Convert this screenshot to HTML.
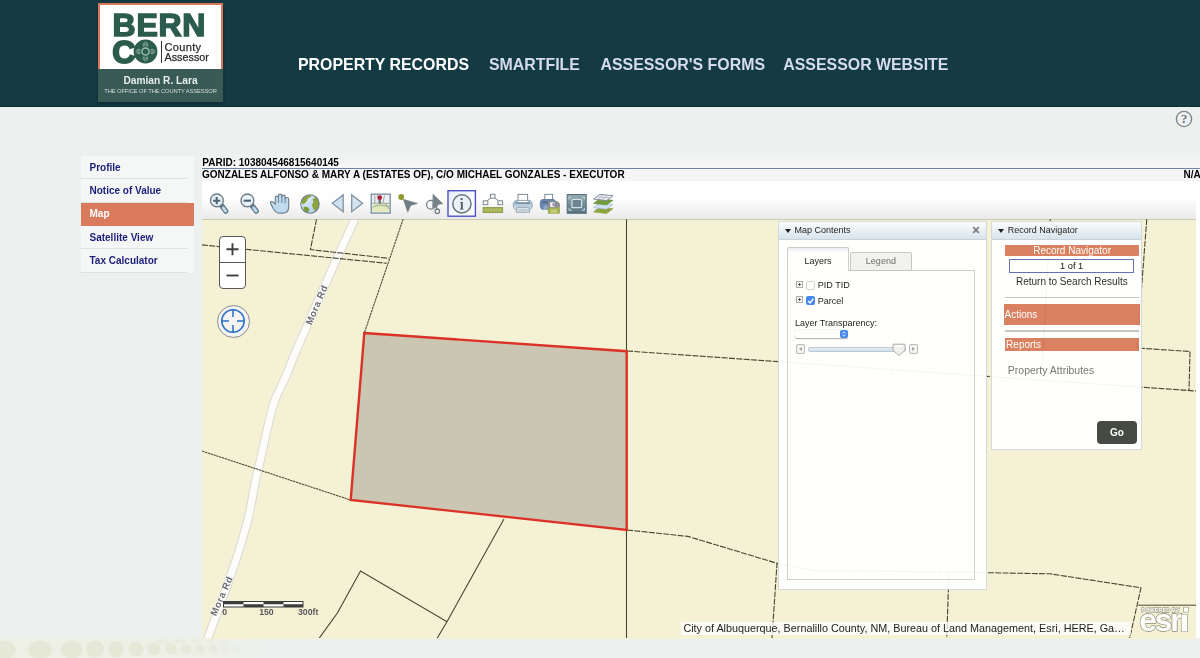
<!DOCTYPE html>
<html lang="en">
<head>
<meta charset="utf-8">
<title>Bernalillo County Assessor - Map</title>
<style>
*{box-sizing:border-box}
html,body{margin:0;padding:0}
body{width:1200px;height:658px;overflow:hidden;position:relative;background:#ecf0ef;font-family:"Liberation Sans",Arial,sans-serif;color:#000}
.abs{position:absolute}
#hdr,#side,#main{will-change:transform}
#hdr{position:absolute;left:0;top:0;width:1200px;height:106.6px;background:#143a43;border-bottom:1px solid #0f2f37}
#nav a{position:absolute;top:54px;font-weight:bold;font-size:15.9px;line-height:22px;color:#fff;white-space:nowrap;text-decoration:none;transform-origin:0 50%}
#nav a.dim{color:#d5dcea}
#logo{position:absolute;left:98px;top:3px;width:125px;height:99px;box-shadow:0 2px 3px rgba(0,0,0,.25)}
#logo .top{position:absolute;left:0;top:0;width:125px;height:65.7px;background:#fff;border:2.5px solid #d9775a;border-bottom:none}
#logo .bot{position:absolute;left:0;top:65.7px;width:125px;height:33.3px;background:#3a5a56}
#side{position:absolute;left:81px;top:156.4px;width:113px}
#side div{height:23.35px;background:#f5f6f6;position:relative}
#side div a{display:block;margin-right:7px;height:23.35px;border-bottom:1px solid #dfe0e0;padding-left:8.5px;font-weight:bold;font-size:10px;line-height:23.7px;color:#1b1f7a;text-decoration:none}
#side div.act{background:linear-gradient(#d87a5b 0,#d87a5b 22.6px,#f5f6f6 22.6px)}
#side div.act a{color:#fff;border-bottom-color:transparent;line-height:22.6px}
#main{position:absolute;left:202px;top:107px;width:998px;height:531px}
#tb{position:absolute;left:0;top:74px;width:994px;height:39px;background:linear-gradient(#fff 0%,#fefefe 45%,#e9e9e9 100%)}
#map{position:absolute;left:0;top:112px;width:994px;height:419.7px;background:#f4f1d4;overflow:hidden}
.panel{position:absolute;background:#fff;opacity:.94;border:1px solid #d3d7da}
.ptitle{position:absolute;left:0;top:0;right:0;height:18px;background:linear-gradient(#fafcfd,#e9f0f6 45%,#d6e3ee);border-bottom:1px solid #c6d1da;font-size:9px;line-height:17px;color:#111}
.obar{position:absolute;background:#d87a5b;color:#fff}

#grad{position:absolute;left:202px;top:151px;width:998px;height:17.5px;background:linear-gradient(#ecf0ef 0%,#f0f3f2 40%,#f8f8f6 100%)}
#parid{position:absolute;left:0.3px;top:49.8px;font-weight:bold;font-size:10px;line-height:12px;white-space:nowrap}
#rule{position:absolute;left:0;top:60.5px;width:998px;height:1.3px;background:#6d86a8}
#own{position:absolute;left:0;top:62.3px;width:998px;height:11.4px;background:#f5f5f5;font-weight:bold;font-size:10px;line-height:12px;white-space:nowrap}
#na{position:absolute;left:981.5px;top:62px;font-weight:bold;font-size:10px;line-height:12px;white-space:nowrap}
#white{position:absolute;left:0;top:74px;width:998px;height:457px;background:#fff}
.zoomctl{position:absolute;left:17px;top:17.3px;width:27px;height:53px;background:#fff;border:1px solid #57585a;border-radius:4px}
.zoomctl i{position:absolute;left:0;right:0;top:25px;height:1px;background:#57585a}
.loc{position:absolute;left:14.9px;top:85.8px;width:33px;height:33px;border-radius:50%;background:#f3f3f3;border:1px solid #8c8c8c}
#attr{position:absolute;left:478.7px;top:402.8px;width:450px;height:13px;background:rgba(255,255,255,.72);font-size:10.8px;line-height:13px;color:#222;white-space:nowrap;padding-left:2.7px}
.tab{position:absolute;font-size:9px;text-align:center;color:#111}
.cb{position:absolute;width:9.5px;height:9.5px;border-radius:2px}
.plus{position:absolute;width:7px;height:7px;border:1px solid #a9a9a9;background:#f4f4f4}
.plus:before{content:"";position:absolute;left:1px;right:1px;top:2px;height:1px;background:#555}
.plus:after{content:"";position:absolute;top:1px;bottom:1px;left:2px;width:1px;background:#555}
.ptxt{position:absolute;font-size:9px;line-height:11px;white-space:nowrap;color:#111}
.hr{position:absolute;height:1.6px;background:#c2c2c2}
</style>
</head>
<body>

<!-- header -->
<div id="hdr">
  <div id="logo">
    <div class="top"></div>
    <div class="bot"></div>
    <div class="abs" id="bern" style="left:14.6px;top:3.8px;font-weight:bold;font-size:32px;line-height:36px;color:#2b5c4e;white-space:nowrap;letter-spacing:.7px;-webkit-text-stroke:1.5px #2b5c4e">BERN</div>
    <div class="abs" id="cee" style="left:14.2px;top:30.7px;font-weight:bold;font-size:32px;line-height:36px;color:#2b5c4e;-webkit-text-stroke:1.8px #2b5c4e">C</div>
    <svg class="abs" style="left:35px;top:36.3px" width="25" height="25" viewBox="-12.5 -12.5 25 25">
      <circle r="11.9" fill="#2b5c4e"/>
      <g stroke="#9cbcae" stroke-width=".75" fill="none">
        <circle r="3.6" stroke-width="1.5"/>
        <path d="M-2.1 -5V-8.3M-.7 -5.2V-9.8M.7 -5.2V-9.8M2.1 -5V-8.3"/>
        <path d="M-2.1 5V8.3M-.7 5.2V9.8M.7 5.2V9.8M2.1 5V8.3"/>
        <path d="M-5 -2.1H-8.3M-5.2 -.7H-9.8M-5.2 .7H-9.8M-5 2.1H-8.3"/>
        <path d="M5 -2.1H8.3M5.2 -.7H9.8M5.2 .7H9.8M5 2.1H8.3"/>
      </g>
    </svg>
    <div class="abs" style="left:63px;top:37.5px;width:1px;height:22px;background:#333"></div>
    <div class="abs" id="cnty" style="left:66.5px;top:38px;font-size:11px;line-height:13px;color:#2b2b2b;white-space:nowrap;letter-spacing:.35px;-webkit-text-stroke:.25px #2b2b2b">County</div>
    <div class="abs" id="assr" style="left:66.5px;top:48px;font-size:10.8px;line-height:13px;color:#2b2b2b;white-space:nowrap;-webkit-text-stroke:.25px #2b2b2b">Assessor</div>
    <div class="abs" id="dam" style="left:0;top:70.5px;width:125px;text-align:center;font-weight:bold;font-size:10.2px;line-height:13px;color:#e3ece8;white-space:nowrap">Damian R. Lara</div>
    <div class="abs" id="off" style="left:0;top:84.3px;width:125px;text-align:center;font-size:5.8px;line-height:8px;color:#d4dedb;white-space:nowrap;letter-spacing:-.12px">THE OFFICE OF THE COUNTY ASSESSOR</div>
  </div>
  <div id="nav">
    <a style="left:298px">PROPERTY RECORDS</a>
    <a class="dim" style="left:489px">SMARTFILE</a>
    <a class="dim" style="left:600.5px">ASSESSOR'S FORMS</a>
    <a class="dim" style="left:783.3px">ASSESSOR WEBSITE</a>
  </div>
</div>

<div id="grad"></div>
<svg class="abs" style="left:1174.2px;top:109.4px" width="20" height="20" viewBox="0 0 20 20"><circle cx="10" cy="10" r="7.6" fill="#eef1f1" stroke="#818586" stroke-width="1.4"/><text x="10" y="14.4" text-anchor="middle" font-family="Liberation Serif, Times New Roman, serif" font-weight="bold" font-size="13.5" fill="#7a7c7d">?</text></svg>
<!-- footer pattern -->
<svg class="abs" style="left:0;top:638px" width="272" height="20" viewBox="0 0 272 20">
  <defs><linearGradient id="gFoot" x1="0" y1="0" x2="1" y2="0"><stop offset="0" stop-color="#eef0e5"/><stop offset=".75" stop-color="#eef0e7"/><stop offset="1" stop-color="#ecf0ee"/></linearGradient></defs>
  <clipPath id="cFoot"><rect x="0" y="1.5" width="272" height="20"/></clipPath><rect x="0" y="0" width="272" height="20" fill="url(#gFoot)"/>
  <g fill="#e5e8d7" clip-path="url(#cFoot)">
    <ellipse cx="4" cy="12" rx="12" ry="9.5"/>
    <ellipse cx="40" cy="12" rx="12" ry="9.5"/>
    <ellipse cx="72" cy="11.5" rx="11" ry="9"/>
    <ellipse cx="95" cy="11" rx="9" ry="8.5" transform="rotate(20 95 11)"/>
    <ellipse cx="116" cy="11" rx="8" ry="8" transform="rotate(25 116 11)"/>
    <ellipse cx="136" cy="11" rx="7.5" ry="7" transform="rotate(25 136 11)"/>
    <ellipse cx="154" cy="11" rx="7" ry="6" transform="rotate(25 154 11)"/>
    <ellipse cx="171" cy="11" rx="6.5" ry="5.5" transform="rotate(25 171 11)" opacity=".9"/>
    <ellipse cx="186" cy="11" rx="6" ry="5" transform="rotate(25 186 11)" opacity=".8"/>
    <ellipse cx="200" cy="11" rx="5.5" ry="4.5" transform="rotate(25 200 11)" opacity=".7"/>
    <ellipse cx="213" cy="11" rx="5" ry="4" transform="rotate(25 213 11)" opacity=".55"/>
    <ellipse cx="225" cy="11" rx="4.5" ry="3.5" transform="rotate(25 225 11)" opacity=".4"/>
    <ellipse cx="236" cy="11" rx="4" ry="3" transform="rotate(25 236 11)" opacity=".3"/>
    <ellipse cx="163" cy="3" rx="6" ry="3" opacity=".6"/><ellipse cx="180" cy="3" rx="5.5" ry="2.8" opacity=".55"/><ellipse cx="196" cy="3" rx="5" ry="2.6" opacity=".5"/><ellipse cx="210" cy="3" rx="4.5" ry="2.4" opacity=".4"/><ellipse cx="223" cy="3" rx="4" ry="2.2" opacity=".3"/>
  </g>
</svg>
<!-- sidebar -->
<div id="side">
  <div><a>Profile</a></div>
  <div><a>Notice of Value</a></div>
  <div class="act"><a>Map</a></div>
  <div><a>Satellite View</a></div>
  <div><a>Tax Calculator</a></div>
</div>

<!-- main -->
<div id="main">
  <div id="white"></div>
  <div id="parid">PARID: 103804546815640145</div>
  <div id="rule"></div>
  <div id="own">GONZALES ALFONSO &amp; MARY A (ESTATES OF), C/O MICHAEL GONZALES - EXECUTOR</div>
  <div id="na">N/A</div>
  <div id="tb">
<svg class="abs" style="left:0;top:0" width="994" height="39" viewBox="202 181 994 39">
  <defs>
    <linearGradient id="gOcean" x1="0" y1="0" x2="1" y2="1"><stop offset="0" stop-color="#eef4ff"/><stop offset="1" stop-color="#a9c9ec"/></linearGradient>
    <linearGradient id="gPrn" x1="0" y1="0" x2="0" y2="1"><stop offset="0" stop-color="#9fb9d0"/><stop offset="1" stop-color="#d3e3f0"/></linearGradient>
    <linearGradient id="gFs" x1="0" y1="0" x2="0" y2="1"><stop offset="0" stop-color="#94adac"/><stop offset="1" stop-color="#56707f"/></linearGradient>
    <linearGradient id="gInfo" x1="0" y1="0" x2="1" y2="1"><stop offset="0" stop-color="#e3eefb"/><stop offset=".6" stop-color="#fbfcff"/><stop offset="1" stop-color="#fff"/></linearGradient>
    <clipPath id="cGlobe"><circle cx="310" cy="204" r="9"/></clipPath>
  </defs>
  <!-- zoom in -->
  <g id="ic1">
    <path d="M221.2 205.2L225.8 211.2" stroke="#627783" stroke-width="5.2" stroke-linecap="round"/>
    <path d="M223.2 207.8L225.7 211.1" stroke="#bcdcee" stroke-width="2.8" stroke-linecap="round"/>
    <circle cx="216.9" cy="200.4" r="6.4" fill="#e9f1f6" stroke="#6a7d88" stroke-width="1.4"/>
    <path d="M213.1 200.7H220.3M216.7 197.1V204.3" stroke="#4f6672" stroke-width="2.1"/>
  </g>
  <!-- zoom out -->
  <g id="ic2">
    <path d="M251.7 205.2L256.3 211.2" stroke="#627783" stroke-width="5.2" stroke-linecap="round"/>
    <path d="M253.7 207.8L256.2 211.1" stroke="#bcdcee" stroke-width="2.8" stroke-linecap="round"/>
    <circle cx="247.4" cy="200.4" r="6.4" fill="#e9f1f6" stroke="#6a7d88" stroke-width="1.4"/>
    <path d="M243.6 200.7H251" stroke="#4f6672" stroke-width="2.1"/>
  </g>
  <!-- hand -->
  <g id="ic3">
    <path d="M270.5 203.4C269.9 202 271.6 200.9 273 201.9L275.3 204.2V197.6C275.3 195.5 278.4 195.5 278.4 197.6V195.9C278.4 193.6 281.8 193.6 281.8 195.9V196.7C281.8 194.6 285.2 194.6 285.2 196.7V199C285.2 197 288.7 197 288.7 199.2V207C288.7 211 286 213.2 282.5 213.2H279.5C276.5 213.2 275 211.5 273.5 209Z" fill="#c1daef" stroke="#6d8291" stroke-width="1.2" stroke-linejoin="round"/>
    <path d="M278.4 197.6V203M281.8 196V203M285.2 197V203.3" stroke="#6d8291" stroke-width="1" fill="none"/>
  </g>
  <!-- globe -->
  <g id="ic4">
    <circle cx="310" cy="204" r="9.2" fill="url(#gOcean)"/>
    <g clip-path="url(#cGlobe)" fill="#8aa63a">
      <path d="M300 200C301.5 196 305 194.5 309.5 194.3L311.5 196.5L308 198.5L306.5 201.5L303.5 204.5L301.5 203Z"/>
      <path d="M313.5 195L317 197L319.5 201V208L316 212L313 208.5L312 205L313.5 202L312.5 199.5L315 197.5Z"/>
      <path d="M303.5 206.5L307.5 207L309.5 209.5L307.5 213.5L304.5 212Z" fill="#7a9c33"/>
    </g>
    <circle cx="310" cy="204" r="9.2" fill="none" stroke="#6d7f88" stroke-width="1.1"/>
  </g>
  <!-- prev / next -->
  <path d="M332.3 203.3L343.2 194.9V211.7Z" fill="#cfe0f0" stroke="#8193a0" stroke-width="1.3" stroke-linejoin="miter"/>
  <path d="M362.5 203.3L351.7 194.9V211.7Z" fill="#d6e4f1" stroke="#8193a0" stroke-width="1.3" stroke-linejoin="miter"/>
  <!-- map pin icon -->
  <g id="ic7">
    <rect x="371.3" y="194.2" width="18.9" height="18.9" fill="#eef2ea" stroke="#8499a8" stroke-width="1.5"/>
    <rect x="372.8" y="203.5" width="16" height="8.2" fill="#e1e8ba"/>
    <rect x="372.8" y="195.6" width="16" height="8" fill="#edf0f2"/>
    <g stroke="#8b948d" stroke-width=".8" fill="none">
      <path d="M372.5 203.3H389M372.5 207.2C378 204.5 384 204.5 389 207.2M377 195.5L379 203M384.5 195.5L383 203M385.5 203.5L389 209M374.8 195.5V203"/>
    </g>
    <path d="M380 198.5V203.5" stroke="#3c3c3c" stroke-width="1.3"/>
    <circle cx="379.8" cy="197.6" r="2.3" fill="#b3173f"/>
  </g>
  <!-- point select -->
  <g id="ic8">
    <path d="M403.3 199.3L417.4 203.5L410.6 205.4L407.8 212.2Z" fill="#6f7d83" stroke="#6f7d83" stroke-width=".6" stroke-linejoin="round"/>
    <circle cx="401.2" cy="197" r="2.9" fill="#8f9a2c"/>
  </g>
  <!-- lasso select -->
  <g id="ic9">
    <circle cx="431" cy="204.7" r="4.4" fill="none" stroke="#727f85" stroke-width="1.2"/>
    <path d="M433 193.9L442.9 203.8L438.2 204.5L436.6 207.3L432.5 207.8Z" fill="#76848a" stroke="#76848a" stroke-width=".5" stroke-linejoin="round"/>
    <path d="M436 206L437 209.2" stroke="#727f85" stroke-width="1.4"/>
    <circle cx="437.3" cy="211.2" r="2.2" fill="#fff" stroke="#727f85" stroke-width="1.3"/>
  </g>
  <!-- info (selected) -->
  <g id="ic10">
    <rect x="448" y="190.7" width="27.4" height="25.5" fill="url(#gInfo)" stroke="#4c52c6" stroke-width="1.4"/>
    <circle cx="461.9" cy="203.9" r="9.1" fill="#eaf1f7" stroke="#66777e" stroke-width="1.5"/>
    <circle cx="461.6" cy="199.2" r="1.15" fill="#4a5a60"/>
    <path d="M460.2 202H462.8V208.3L463.8 209.5H459.6L460.9 208.3V203.1H460.2Z" fill="#4a5a60"/>
  </g>
  <!-- measure -->
  <g id="ic11">
    <path d="M490.5 198L487.5 200.6M494.8 198L498.2 200.6" stroke="#7b878c" stroke-width="1"/>
    <rect x="490.4" y="194.3" width="4.6" height="3.9" fill="#fff" stroke="#7b878c" stroke-width="1"/>
    <rect x="483.2" y="200.8" width="4.6" height="3.9" fill="#fff" stroke="#7b878c" stroke-width="1"/>
    <rect x="498" y="200.8" width="4.6" height="3.9" fill="#fff" stroke="#7b878c" stroke-width="1"/>
    <rect x="483.1" y="207.6" width="19.6" height="4.9" fill="#a7b354" stroke="#8b9742" stroke-width=".9"/>
    <path d="M486 208.7V211.5M488.8 208.7V211.5M491.6 208.7V211.5M494.4 208.7V211.5M497.2 208.7V211.5M500 208.7V211.5" stroke="#c3cc85" stroke-width=".8"/>
  </g>
  <!-- print -->
  <g id="ic12">
    <rect x="518" y="194.4" width="9.6" height="7" fill="#fff" stroke="#808c93" stroke-width="1"/>
    <path d="M516.5 200.4H529C531 200.4 532.2 202.5 532.2 205C532.2 207.8 531 210 529 210H516.5C514.5 210 513.2 207.8 513.2 205C513.2 202.5 514.5 200.4 516.5 200.4Z" fill="url(#gPrn)" stroke="#8ea2b2" stroke-width=".9"/>
    <rect x="518.1" y="201" width="9.4" height="1.2" fill="#fff"/>
    <path d="M515.5 203.1H530" stroke="#64747f" stroke-width="1.1"/>
    <path d="M517 207.3H528.7L529.6 212.3H516.1Z" fill="#dbe2e8" stroke="#8c9aa4" stroke-width=".8"/>
    <path d="M518.5 210H527.3" stroke="#b5c0c8" stroke-width="1.2"/>
  </g>
  <!-- print + save -->
  <g id="ic13">
    <rect x="544.8" y="194.4" width="7.8" height="6" fill="#fff" stroke="#808c93" stroke-width="1"/>
    <path d="M542.5 199.5H553C555 199.5 556 201.5 556 204C556 207 555 209.3 553 209.3H542.5C540.8 209.3 540.2 207 540.2 204C540.2 201.5 540.8 199.5 542.5 199.5Z" fill="#6a87b2" stroke="#5c719a" stroke-width=".8"/>
    <path d="M542 202.2H549" stroke="#3f5578" stroke-width="1"/>
    <rect x="543.5" y="205.5" width="4" height="4.5" fill="#93a7c6"/>
    <path d="M548.3 201.8H557.5L559.4 203.6V213.3H548.3Z" fill="#a5b14d" stroke="#8f9a45" stroke-width=".7"/>
    <path d="M548.3 201.8H557.5L559.4 203.6V207.5H548.3Z" fill="#8d8aa2"/>
    <rect x="550.2" y="202.3" width="4.2" height="4.6" fill="#f4f4f6"/>
    <rect x="552.6" y="203" width="1.5" height="3" fill="#8d8aa2"/>
    <rect x="550.5" y="209.3" width="6.8" height="3.6" fill="#c2cb78"/>
  </g>
  <!-- full extent -->
  <g id="ic14">
    <rect x="567.2" y="194.5" width="19" height="18.8" fill="url(#gFs)" stroke="#546e7d" stroke-width="1"/>
    <rect x="571.9" y="199.3" width="9.7" height="8.4" rx="1.2" fill="#6e8592" stroke="#d3e0e5" stroke-width="1.3"/>
    <path d="M569.2 199.5V197.2H571.8M584.3 199.5V197.2H581.7M569.2 207.8V210.3H571.8M584.3 207.8V210.3H581.7" fill="none" stroke="#c4d4da" stroke-width="1.1"/>
  </g>
  <!-- layers -->
  <g id="ic15" stroke-linejoin="round">
    <path d="M599.5 207.2L613 208.7L606.5 213.6L593.5 212Z" fill="#8ea53c" stroke="#7d9433" stroke-width=".5"/>
    <path d="M599.5 203L613 204.5L606.5 209.2L593.5 207.7Z" fill="#cfe0f4" stroke="#9db0c8" stroke-width=".6"/>
    <path d="M599.5 198.8L613 200.3L606.5 205L593.5 203.5Z" fill="#6f9c3c" stroke="#5f8a33" stroke-width=".5"/>
    <path d="M599.8 194.3L613.2 195.8L606.7 200.6L593.6 199.1Z" fill="#e9ecf2" stroke="#7f8593" stroke-width=".9"/>
    <path d="M597 196.6L610 198.1M603.5 194.8L597.3 199.5M607.8 195.3L601.6 200" stroke="#a9aebb" stroke-width=".7" fill="none"/>
  </g>
</svg>
</div>
  <div id="map">
<svg class="abs" style="left:0;top:0" width="994" height="419" viewBox="202 219 994 419">
  <g fill="none" stroke-linejoin="round">
    <!-- road -->
    <path id="road" d="M354.9 219.0 C350.3 229.3 336.5 259.2 326.8 281.0 C317.1 302.8 303.3 334.3 296.5 350.0 C289.7 365.7 290.1 366.7 286.5 375.0 C282.9 383.3 278.1 391.7 275.0 400.0 C271.9 408.3 270.8 414.5 268.2 425.0 C265.6 435.5 261.8 453.8 259.7 463.0 C257.6 472.2 257.5 471.3 255.7 480.0 C253.9 488.7 250.8 506.7 249.0 515.0 C247.2 523.3 246.9 523.3 245.0 530.0 C243.1 536.7 241.4 543.3 237.6 555.0 C233.8 566.7 227.0 586.0 222.0 600.0 C217.0 614.0 209.9 632.5 207.5 639.0" stroke="#d9d9d6" stroke-width="9"/>
    <path d="M354.9 219.0 C350.3 229.3 336.5 259.2 326.8 281.0 C317.1 302.8 303.3 334.3 296.5 350.0 C289.7 365.7 290.1 366.7 286.5 375.0 C282.9 383.3 278.1 391.7 275.0 400.0 C271.9 408.3 270.8 414.5 268.2 425.0 C265.6 435.5 261.8 453.8 259.7 463.0 C257.6 472.2 257.5 471.3 255.7 480.0 C253.9 488.7 250.8 506.7 249.0 515.0 C247.2 523.3 246.9 523.3 245.0 530.0 C243.1 536.7 241.4 543.3 237.6 555.0 C233.8 566.7 227.0 586.0 222.0 600.0 C217.0 614.0 209.9 632.5 207.5 639.0" stroke="#fdfcf9" stroke-width="7"/>
  </g>
  <g fill="none" stroke="#47462f" stroke-width="1.1">
    <g stroke-dasharray="6 1.3">
      <path d="M202 244.9 L386.8 263.3"/>
      <path d="M316.6 219 L310.4 249.6 L388.8 258.3"/>
      <path d="M627 351 L1196 391"/>
      <path d="M627 530 L688 536.4 L777 563.3 L772 638"/>
      <path d="M777 563.3 L814 570.6 L949 572 L1050 573.8 L1141 587.8 L1129.5 639"/>
      <path d="M949 572 L946.7 638"/>
      <path d="M1146.8 219 L1137 348 L1190 351.5 L1189 390.5"/>
      <path d="M1050.3 219 L1042 370"/>
    </g>
    <g stroke-dasharray="2.4 .6" stroke-width="1.05">
      <path d="M403.2 219 L364.5 332.4"/>
      <path d="M202 451 L350.5 500"/>
    </g>
    <g stroke-width="1.1">
      <path d="M626.5 219 L626.5 351"/>
      <path d="M626.5 530 L626.5 638"/>
      <path d="M319 638.5 L337.4 613 L360.5 571 L447 621.7"/>
      <path d="M504 519 L447 621.7 L437 638.5"/>
      <path d="M1138.3 605.2 L1196 605.2" stroke-width="1"/>
    </g>
  </g>
  <polygon points="364.3,333 626.7,351.2 626.7,529.9 350.7,500" fill="#cbc6b1" stroke="#dc3127" stroke-width="2.4" stroke-linejoin="miter"/>
  <g font-family="Liberation Sans, Arial, sans-serif" font-size="9.5" font-weight="bold" fill="#6a6b73" text-anchor="middle" stroke="#fdfcf8" stroke-width="1.6" paint-order="stroke" stroke-linejoin="round">
    <text transform="translate(316.6,304.8) rotate(-67)" y="3.3" letter-spacing="0.6">Mora Rd</text>
    <text transform="translate(221.6,595.8) rotate(-66)" y="3.3" letter-spacing="0.6">Mora Rd</text>
  </g>
</svg>
<div class="abs" style="left:0;top:0;width:994px;height:1px;background:rgba(150,152,140,.45)"></div>
<!-- zoom slider -->
<div class="zoomctl"><i></i>
  <svg class="abs" style="left:0;top:0" width="25" height="51" viewBox="0 0 25 51"><g stroke="#404040" stroke-width="1.9" fill="none"><path d="M6.5 12.3H18.5M12.5 6.3V18.3"/><path d="M6.5 38.5H18.5"/></g></svg>
</div>
<div class="loc">
  <svg class="abs" style="left:2.5px;top:2.5px" width="26" height="26" viewBox="0 0 26 26"><g fill="none" stroke="#2b6fc4" stroke-width="1.5"><circle cx="13" cy="13" r="11.2"/><path d="M13 1.8V9M13 17V24.2M1.8 13H9M17 13H24.2"/></g></svg>
</div>
<!-- scale bar -->
<svg class="abs" style="left:18px;top:380px" width="110" height="26" viewBox="0 0 110 26">
  <rect x="3.5" y="2.5" width="79.5" height="5.5" fill="#fff" stroke="#3c3c3c" stroke-width="1"/>
  <path d="M3.5 2.5h20v2.75h-20zM23.5 5.25h20v2.75h-20zM43.5 2.5h20v2.75h-20zM63.5 5.25h19.5v2.75h-19.5z" fill="#3c3c3c"/>
  <g font-family="Liberation Sans, Arial, sans-serif" font-size="8.7" font-weight="bold" fill="#585858"><text x="2.3" y="16">0</text><text x="39.2" y="16">150</text><text x="78" y="16">300ft</text></g>
</svg>
<div id="attr">City of Albuquerque, Bernalillo County, NM, Bureau of Land Management, Esri, HERE, Ga…</div>
<!-- esri logo -->
<svg class="abs" style="left:934px;top:384px" width="60" height="34" viewBox="1136 603 60 34">
  <g font-family="Liberation Sans, Arial, sans-serif" font-weight="bold" fill="#fdfdfb" stroke="#a9a795" paint-order="stroke" stroke-linejoin="round" style="filter:drop-shadow(0 0 .7px rgba(110,108,88,.85))">
  <text x="1141.5" y="611.6" font-size="5.4" letter-spacing=".15" stroke-width=".9">POWERED BY</text>
  <text x="1139.3" y="631.4" font-size="31.5" letter-spacing="-2" stroke-width="1.3">esr</text>
  <rect x="1181.6" y="614.6" width="5.6" height="16.8" stroke-width="1.3"/>
  <rect x="1183.8" y="607.6" width="4.4" height="4.2" stroke-width="1.1"/></g>
</svg>

<!-- Map Contents panel -->
<div class="panel" style="left:575.5px;top:2px;width:209px;height:369px">
  <div class="ptitle"><span class="abs" style="left:6.5px;top:7px;width:0;height:0;border-left:3.2px solid transparent;border-right:3.2px solid transparent;border-top:4px solid #111"></span><span class="abs" style="left:16px;top:0">Map Contents</span>
    <svg class="abs" style="left:193px;top:4.3px" width="8" height="8" viewBox="0 0 8 8"><path d="M1.2 1.2L6.8 6.8M6.8 1.2L1.2 6.8" stroke="#767676" stroke-width="1.7" fill="none"/></svg>
  </div>
  <div class="abs" style="left:8.4px;top:48.2px;width:188px;height:310.2px;border:1px solid #cdcdcd;background:rgba(255,255,255,.5)"></div>
  <div class="tab" style="left:8.4px;top:25.3px;width:62px;height:23.9px;line-height:26.2px;border:1px solid #c9c9c9;border-bottom:none;border-radius:2px 2px 0 0;background:linear-gradient(#e9eef4 0,#fff 5px,#fff 100%)">Layers</div>
  <div class="tab" style="left:71.4px;top:30.1px;width:62px;height:18.6px;line-height:17.2px;border:1px solid #c3c3c3;border-radius:2px 2px 0 0;background:#f1f1f1;color:#666">Legend</div>
  <span class="plus" style="left:17.2px;top:59.1px"></span>
  <span class="cb" style="left:27.2px;top:58.6px;border:1px solid #d0d0d0;background:#fff"></span>
  <span class="ptxt" style="left:39.3px;top:58.3px">PID TID</span>
  <span class="plus" style="left:17.2px;top:74.3px"></span>
  <span class="cb" style="left:27.2px;top:73.8px;background:#3b82f0"><svg class="abs" style="left:0;top:0" width="9.5" height="9.5" viewBox="0 0 10 10"><path d="M2.3 5.2L4.3 7.3L7.8 2.8" stroke="#fff" stroke-width="1.5" fill="none"/></svg></span>
  <span class="ptxt" style="left:39.3px;top:73.5px">Parcel</span>
  <span class="ptxt" style="left:16.4px;top:96px">Layer Transparency:</span>
  <span class="abs" style="left:16.4px;top:108.2px;width:53px;height:8px;border-radius:2px;background:#fff;box-shadow:0 .5px 1px rgba(0,0,0,.35)"><span class="abs" style="right:0;top:0;width:8px;height:8px;border-radius:2px;background:#3b82f0"><svg class="abs" style="left:0;top:0" width="8" height="8" viewBox="0 0 8 8"><path d="M2.5 3.2L4 1.8L5.5 3.2M2.5 4.8L4 6.2L5.5 4.8" stroke="#fff" stroke-width=".9" fill="none"/></svg></span></span>
  <!-- slider -->
  <span class="abs" style="left:17.7px;top:121.6px;width:9px;height:10.8px;border:1px solid #b5b5b5;border-radius:2px;background:#f4f4f4"><span class="abs" style="left:1.5px;top:2px;border-top:2.6px solid transparent;border-bottom:2.6px solid transparent;border-right:3.5px solid #a0a0a0"></span></span>
  <span class="abs" style="left:29.2px;top:124.6px;width:98px;height:5.4px;border:1px solid #b9c9d6;border-radius:2px;background:linear-gradient(#e4edf4,#cfdde8)"></span>
  <svg class="abs" style="left:113.7px;top:120.9px" width="14" height="13" viewBox="0 0 14 13"><path d="M1 1.2H13V7.4L7 12.4L1 7.4Z" fill="#f0f0f0" stroke="#a9a9a9" stroke-width="1"/><path d="M3 3.2H11" stroke="#fff" stroke-width="1.2"/></svg>
  <span class="abs" style="left:130px;top:121.6px;width:9px;height:10.8px;border:1px solid #b5b5b5;border-radius:2px;background:#f4f4f4"><span class="abs" style="left:2.5px;top:2px;border-top:2.6px solid transparent;border-bottom:2.6px solid transparent;border-left:3.5px solid #a0a0a0"></span></span>
</div>

<!-- Record Navigator panel -->
<div class="panel" style="left:788.8px;top:2px;width:151.2px;height:228.5px">
  <div class="ptitle"><span class="abs" style="left:6.5px;top:7px;width:0;height:0;border-left:3.2px solid transparent;border-right:3.2px solid transparent;border-top:4px solid #111"></span><span class="abs" style="left:16px;top:0">Record Navigator</span></div>
  <div class="obar" style="left:13.5px;top:22.8px;width:133.6px;height:11px;font-size:10px;line-height:11px;text-align:center">Record Navigator</div>
  <div class="abs" style="left:17.3px;top:36.9px;width:125px;height:14px;border:1px solid #5d68b8;background:#fff;font-size:9.3px;line-height:13.2px;text-align:center">1 of 1</div>
  <div class="abs" style="left:13px;top:54.2px;width:134px;font-size:10px;line-height:12px;text-align:center;color:#222">Return to Search Results</div>
  <div class="hr" style="left:13px;top:74.8px;width:134px"></div>
  <div class="obar" style="left:12.7px;top:82.4px;width:135.5px;height:20.5px;font-size:10px;line-height:21.3px">Actions</div>
  <div class="hr" style="left:13px;top:108px;width:134px"></div>
  <div class="obar" style="left:13.3px;top:115.6px;width:133.7px;height:13.5px;font-size:10px;line-height:13px;padding-left:1px">Reports</div>
  <div class="abs" style="left:16px;top:142.3px;font-size:10.5px;line-height:13px;color:#707070;white-space:nowrap">Property Attributes</div>
  <div class="abs" style="left:105px;top:198.5px;width:40.5px;height:23.6px;border-radius:4px;background:#3a4039;color:#fff;font-weight:bold;font-size:10px;line-height:23.5px;text-align:center">Go</div>
</div>
</div>
</div>

</body>
</html>
